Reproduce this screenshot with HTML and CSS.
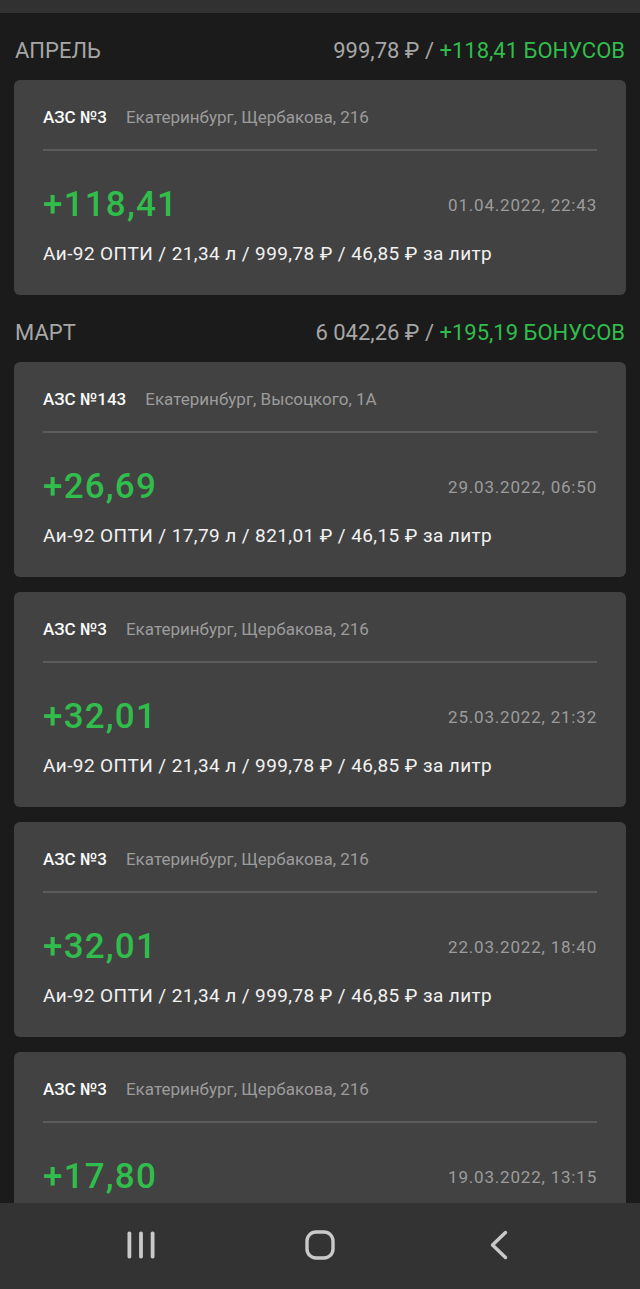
FILE: index.html
```html
<!DOCTYPE html>
<html lang="ru">
<head>
	<meta charset="UTF-8">
	<title>История бонусов</title>
	<meta name="viewport" content="width=device-width, initial-scale=1">
	<link rel="stylesheet" href="styles.css">
</head>
<body>

	<div class="status-bar"></div>

	<div class="content">

		<div class="month">
			<span class="month-name">АПРЕЛЬ</span>
			<span class="month-total">999,78 ₽ / <b>+118,41 БОНУСОВ</b></span>
		</div>

		<div class="card">
			<div class="card-head"><b>АЗС №3</b><span>Екатеринбург, Щербакова, 216</span></div>
			<div class="card-row"><span class="amount">+118,41</span><span class="date">01.04.2022, 22:43</span></div>
			<div class="details">Аи-92 ОПТИ / 21,34 л / 999,78 ₽ / 46,85 ₽ за литр</div>
		</div>

		<div class="month">
			<span class="month-name">МАРТ</span>
			<span class="month-total">6 042,26 ₽ / <b>+195,19 БОНУСОВ</b></span>
		</div>

		<div class="card">
			<div class="card-head"><b>АЗС №143</b><span>Екатеринбург, Высоцкого, 1А</span></div>
			<div class="card-row"><span class="amount">+26,69</span><span class="date">29.03.2022, 06:50</span></div>
			<div class="details">Аи-92 ОПТИ / 17,79 л / 821,01 ₽ / 46,15 ₽ за литр</div>
		</div>

		<div class="card">
			<div class="card-head"><b>АЗС №3</b><span>Екатеринбург, Щербакова, 216</span></div>
			<div class="card-row"><span class="amount">+32,01</span><span class="date">25.03.2022, 21:32</span></div>
			<div class="details">Аи-92 ОПТИ / 21,34 л / 999,78 ₽ / 46,85 ₽ за литр</div>
		</div>

		<div class="card">
			<div class="card-head"><b>АЗС №3</b><span>Екатеринбург, Щербакова, 216</span></div>
			<div class="card-row"><span class="amount">+32,01</span><span class="date">22.03.2022, 18:40</span></div>
			<div class="details">Аи-92 ОПТИ / 21,34 л / 999,78 ₽ / 46,85 ₽ за литр</div>
		</div>

		<div class="card">
			<div class="card-head"><b>АЗС №3</b><span>Екатеринбург, Щербакова, 216</span></div>
			<div class="card-row"><span class="amount">+17,80</span><span class="date">19.03.2022, 13:15</span></div>
			<div class="details">Аи-92 ОПТИ / 21,34 л / 999,78 ₽ / 46,85 ₽ за литр</div>
		</div>

	</div>

	<div class="nav-bar">
		<svg width="30" height="30" viewBox="0 0 30 30">
			<g fill="#c9c9c9">
				<rect x="1.5" y="1.5" width="3.8" height="27" rx="1.7"/>
				<rect x="13.1" y="1.5" width="3.8" height="27" rx="1.7"/>
				<rect x="24.7" y="1.5" width="3.8" height="27" rx="1.7"/>
			</g>
		</svg>
		<svg width="30" height="30" viewBox="0 0 30 30">
			<rect x="2" y="2" width="26" height="26" rx="9" fill="none" stroke="#c9c9c9" stroke-width="3.4"/>
		</svg>
		<svg width="30" height="30" viewBox="0 0 30 30">
			<path d="M21.5 2.5 L8.5 15 L21.5 27.5" fill="none" stroke="#c9c9c9" stroke-width="3.4" stroke-linecap="round" stroke-linejoin="round"/>
		</svg>
	</div>

</body>
</html>
```

FILE: styles.css
```css
html {
	box-sizing: border-box;
}

*,
*:before,
*:after {
	box-sizing: inherit;
}

body {
	margin: 0;
	height: 100vh;
	display: flex;
	flex-direction: column;
	background: #1b1b1b;
	font-family: Roboto, "Noto Sans", sans-serif;
	color: #f2f2f2;
	overflow: hidden;
}

.status-bar {
	flex: 0 0 13px;
	background: #313131;
}

.content {
	flex: 1;
	overflow: hidden;
	padding: 0 14px;
}

.month {
	display: flex;
	justify-content: space-between;
	align-items: center;
	padding: 11px 1px 17px;
	line-height: 24px;
	font-size: 22px;
	color: #a6a6a6;
	white-space: nowrap;
}

.month:first-child {
	padding-top: 26px;
}

.month-total b {
	font-weight: normal;
	color: #31bd4c;
}

.card {
	background: #424242;
	border-radius: 6px;
	padding: 25px 29px 29px;
	margin-bottom: 15px;
}

.card-head {
	line-height: 24px;
	font-size: 17px;
	padding-bottom: 20px;
	border-bottom: 2px solid #5c5c5c;
	white-space: nowrap;
}

.card-head b {
	font-weight: 500;
	color: #fafafa;
	margin-right: 19px;
}

.card-head span {
	color: #9c9c9c;
}

.card-row {
	display: flex;
	justify-content: space-between;
	align-items: center;
	margin-top: 33px;
	height: 40px;
}

.amount {
	font-size: 35px;
	font-weight: 500;
	letter-spacing: 1.2px;
	color: #31bd4c;
}

.date {
	font-size: 17px;
	letter-spacing: 0.8px;
	color: #9c9c9c;
	padding-top: 2px;
}

.details {
	margin-top: 18px;
	line-height: 24px;
	font-size: 19px;
	letter-spacing: 0.4px;
	white-space: nowrap;
}

.nav-bar {
	flex: 0 0 86px;
	background: #333333;
	display: flex;
	justify-content: center;
	align-items: center;
	gap: 149px;
	padding-bottom: 2px;
}
```
